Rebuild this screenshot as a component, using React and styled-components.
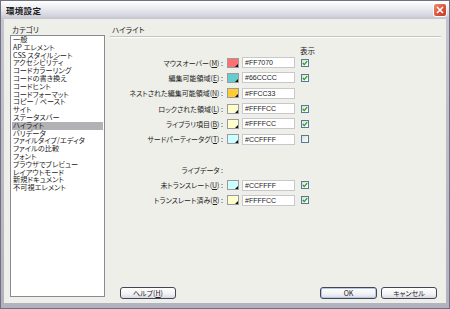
import React from "react";
import styled, { createGlobalStyle } from "styled-components";

const GlobalStyle = createGlobalStyle`
  html, body {
    margin: 0;
    padding: 0;
    overflow: hidden;
  }
  body {
    font-family: "Noto Sans CJK JP", "Noto Sans", sans-serif;
    font-feature-settings: "palt";
    color: #222;
  }
`;

const Window = styled.div`
  width: 450px;
  height: 309px;
  box-sizing: border-box;
  border: 1px solid #70707e;
  background: linear-gradient(#c6c6d2, #b2b2c0);
  display: flex;
  flex-direction: column;
`;

const TitleBar = styled.div`
  height: 18px;
  flex: none;
  display: flex;
  align-items: center;
  justify-content: space-between;
  padding: 0 2px 0 5px;
  background: linear-gradient(#ffffff 0%, #eeeef3 35%, #d8d8e2 75%, #c4c4d0 100%);
`;

const Title = styled.span`
  font-size: 8.5px;
  font-weight: bold;
  color: #1a1a1a;
  letter-spacing: 0.3px;
`;

const CloseButton = styled.div`
  width: 14px;
  height: 14px;
  box-sizing: border-box;
  border: 1px solid #fff;
  border-radius: 3px;
  background: linear-gradient(135deg, #f08d6e, #d6503a 60%, #c23a26);
  display: flex;
  align-items: center;
  justify-content: center;
`;

const Body = styled.div`
  flex: 1;
  margin: 0 3px 5px;
  background: #efefea;
  display: grid;
  grid-template-columns: 95px 1fr;
  column-gap: 5px;
  padding: 5px 5px 4px 6px;
  min-height: 0;
`;

const Column = styled.div`
  display: flex;
  flex-direction: column;
  min-height: 0;
`;

const GroupLabel = styled.div`
  height: 11px;
  line-height: 11px;
  font-size: 7.5px;
  padding-left: ${(p) => p.$indent || 2}px;
  flex: none;
`;

const PanelHeader = styled(GroupLabel)`
  height: 12px;
  border-bottom: 1px solid #c4c4c0;
  box-shadow: 0 1px 0 #fff;
`;

const ListBox = styled.div`
  flex: 1;
  background: #fff;
  border: 1px solid #8a8a94;
  margin-bottom: 2px;
  padding: 0 1px;
`;

const ListItem = styled.div`
  height: 7.8px;
  line-height: 7.8px;
  font-size: 7.2px;
  padding-left: 1px;
  white-space: nowrap;
  background: ${(p) => (p.$selected ? "#b2b2b4" : "transparent")};
`;

const Settings = styled.div`
  display: flex;
  flex-direction: column;
  padding-top: 10px;
`;

const ShowHeader = styled.div`
  height: 8px;
  line-height: 8px;
  font-size: 7.5px;
  padding-left: 190px;
`;

const Row = styled.div`
  height: 15.3px;
  display: flex;
  align-items: center;
`;

const Label = styled.div`
  width: 113px;
  text-align: right;
  font-size: 7px;
  white-space: nowrap;
  flex: none;
`;

const Swatch = styled.div`
  position: relative;
  width: 12px;
  height: 10px;
  box-sizing: border-box;
  margin-left: 4px;
  border: 1px solid #9a9aa4;
  background: ${(p) => p.$color};
  flex: none;
  &::after {
    content: "";
    position: absolute;
    right: 0;
    bottom: 0;
    border-left: 3px solid transparent;
    border-bottom: 3px solid #111;
  }
`;

const ColorInput = styled.div`
  width: 53px;
  height: 11px;
  box-sizing: border-box;
  margin-left: 3px;
  border: 1px solid #c8c8cc;
  background: #fff;
  font-family: "Liberation Sans", Arial, sans-serif;
  font-size: 7px;
  line-height: 9px;
  padding-left: 2px;
  flex: none;
`;

const CheckBox = styled.div`
  width: 8px;
  height: 8px;
  box-sizing: border-box;
  margin-left: 6px;
  border: 1px solid #58789a;
  background: linear-gradient(135deg, #dcdcd6, #ffffff);
  display: flex;
  align-items: center;
  justify-content: center;
  flex: none;
`;

const ButtonRow = styled.div`
  margin-top: auto;
  display: flex;
  align-items: center;
  padding: 0 4px 0 10px;
`;

const Button = styled.div`
  width: ${(p) => p.$width}px;
  height: 12px;
  box-sizing: border-box;
  border: 1px solid #44445a;
  border-radius: 3px;
  background: linear-gradient(#ffffff, #f2f2f4 60%, #d8d8e2);
  box-shadow: ${(p) => (p.$default ? "inset 0 0 0 1px #b6c8e8" : "none")};
  font-size: 7px;
  line-height: 10px;
  text-align: center;
  margin-left: ${(p) => p.$gap || 0}px;
`;

const Spacer = styled.div`
  flex: 1;
`;

const categories = [
  "一般",
  "AP エレメント",
  "CSS スタイルシート",
  "アクセシビリティ",
  "コードカラーリング",
  "コードの書き換え",
  "コードヒント",
  "コードフォーマット",
  "コピー / ペースト",
  "サイト",
  "ステータスバー",
  "ハイライト",
  "バリデータ",
  "ファイルタイプ/エディタ",
  "ファイルの比較",
  "フォント",
  "ブラウザでプレビュー",
  "レイアウトモード",
  "新規ドキュメント",
  "不可視エレメント",
];

const highlights = [
  { name: "マウスオーバー", key: "M", color: "#FF7070", check: true },
  { name: "編集可能領域", key: "E", color: "#66CCCC", check: true },
  { name: "ネストされた編集可能領域", key: "N", color: "#FFCC33", check: null },
  { name: "ロックされた領域", key: "L", color: "#FFFFCC", check: true },
  { name: "ライブラリ項目", key: "B", color: "#FFFFCC", check: true },
  { name: "サードパーティータグ", key: "T", color: "#CCFFFF", check: false },
];

const liveData = [
  { name: "未トランスレート", key: "U", color: "#CCFFFF", check: true },
  { name: "トランスレート済み", key: "R", color: "#FFFFCC", check: true },
];

const Check = () => (
  <svg width="6" height="6" viewBox="0 0 6 6">
    <path d="M0.8 3 L2.3 4.6 L5.2 1.2" fill="none" stroke="#21a121" strokeWidth="1.3" />
  </svg>
);

const SettingRow = ({ item }) => (
  <Row>
    <Label>
      {item.name}(<u>{item.key}</u>) :
    </Label>
    <Swatch $color={item.color} />
    <ColorInput>{item.color}</ColorInput>
    {item.check !== null && <CheckBox>{item.check && <Check />}</CheckBox>}
  </Row>
);

const App = () => {
  return (
    <>
      <GlobalStyle />
      <Window>
        <TitleBar>
          <Title>環境設定</Title>
          <CloseButton>
            <svg width="8" height="8" viewBox="0 0 8 8">
              <path d="M1 1 L7 7 M7 1 L1 7" stroke="#fff" strokeWidth="1.6" />
            </svg>
          </CloseButton>
        </TitleBar>
        <Body>
          <Column>
            <GroupLabel>カテゴリ</GroupLabel>
            <ListBox>
              {categories.map((c) => (
                <ListItem key={c} $selected={c === "ハイライト"}>
                  {c}
                </ListItem>
              ))}
            </ListBox>
          </Column>
          <Column>
            <PanelHeader>ハイライト</PanelHeader>
            <Settings>
              <ShowHeader>表示</ShowHeader>
              {highlights.map((h) => (
                <SettingRow key={h.name} item={h} />
              ))}
              <Row />
              <Row>
                <Label>ライブデータ :</Label>
              </Row>
              {liveData.map((h) => (
                <SettingRow key={h.name} item={h} />
              ))}
            </Settings>
            <ButtonRow>
              <Button $width={56}>
                ヘルプ(<u>H</u>)
              </Button>
              <Spacer />
              <Button $width={57} $default>
                OK
              </Button>
              <Button $width={56} $gap={4}>
                キャンセル
              </Button>
            </ButtonRow>
          </Column>
        </Body>
      </Window>
    </>
  );
};

export default App;
